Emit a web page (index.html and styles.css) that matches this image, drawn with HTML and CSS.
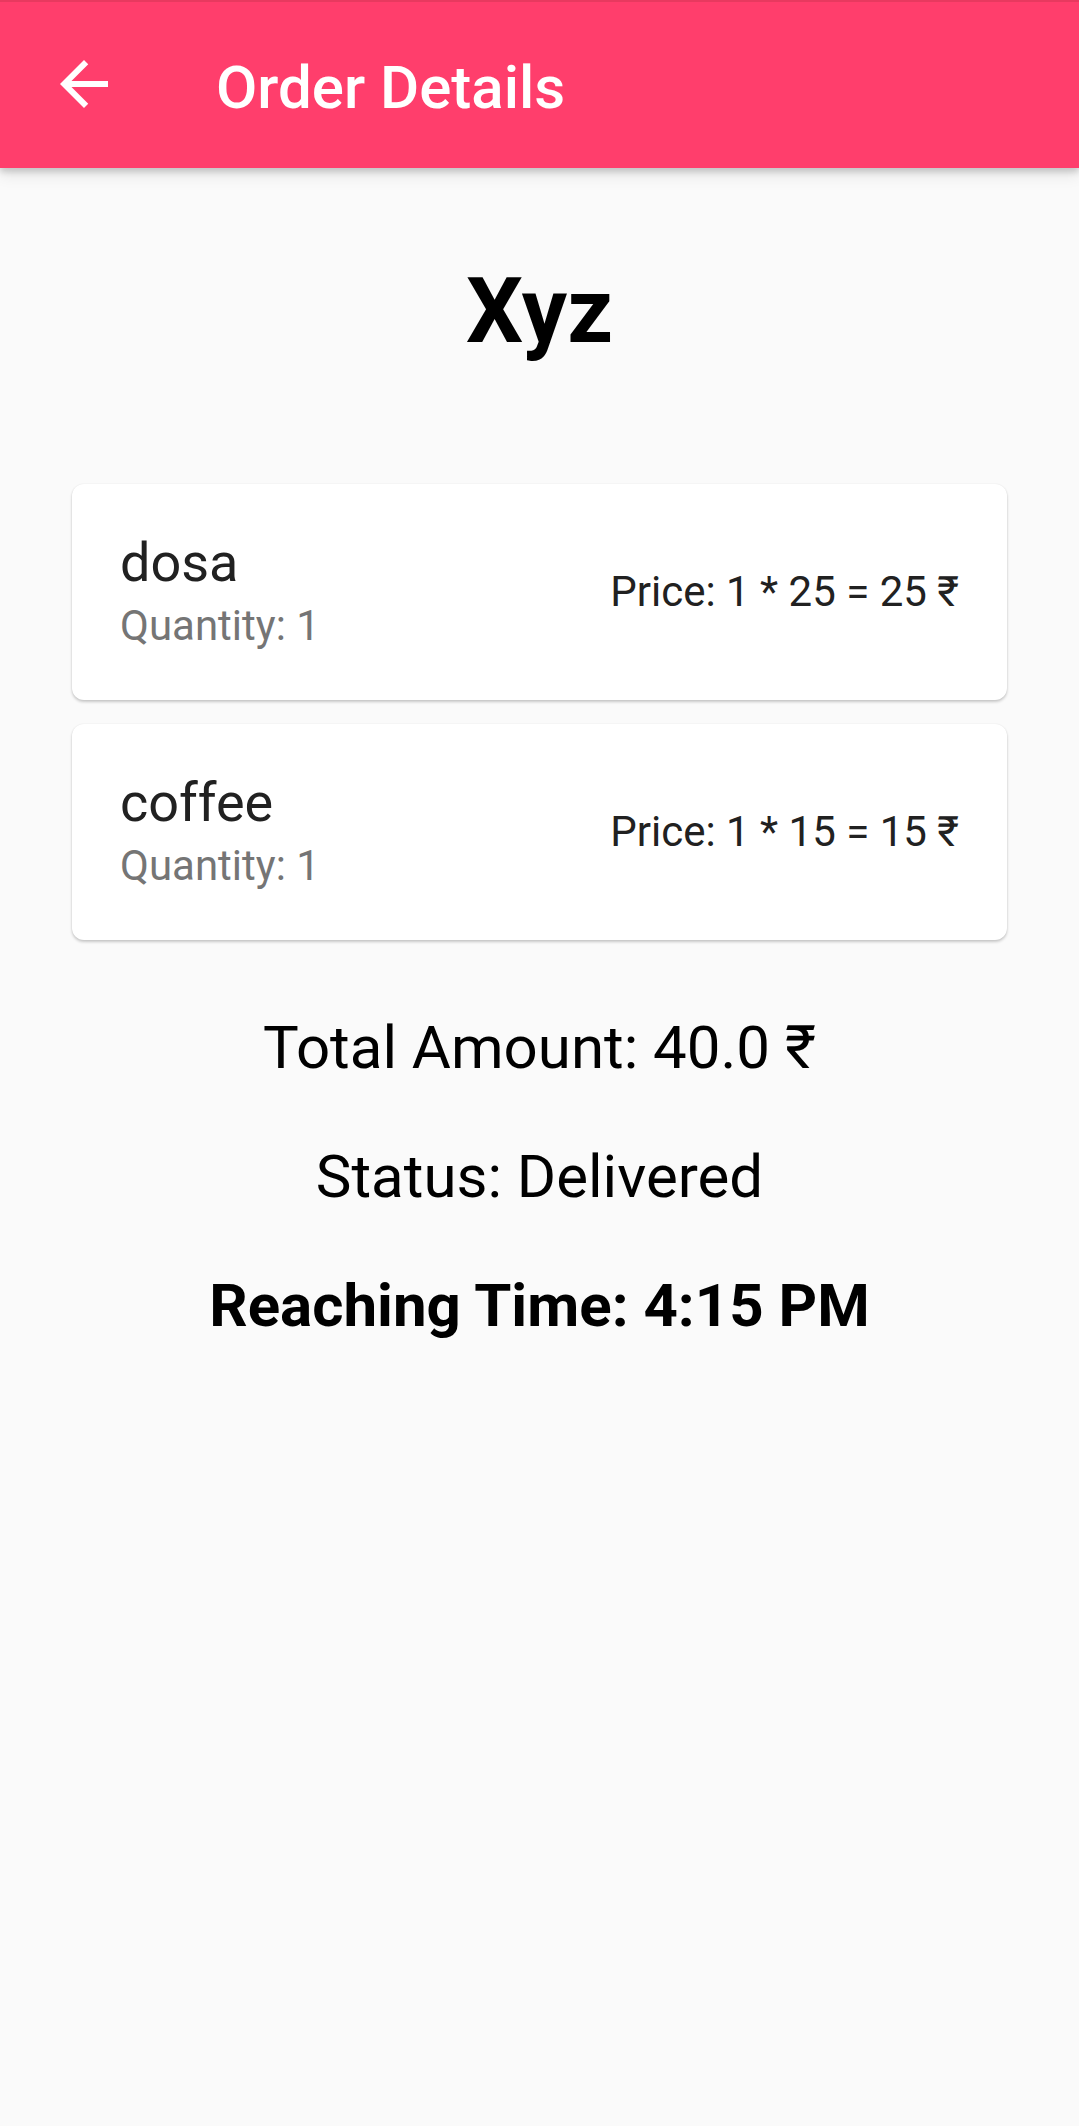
FILE: index.html
```html
<!DOCTYPE html>
<html lang="en">
<head>
<meta charset="utf-8">
<title>Order Details</title>
<link rel="stylesheet" href="styles.css">
</head>
<body>
<header class="app-bar">
  <button class="back-btn" aria-label="Back">
    <svg class="back-icon" viewBox="0 0 24 24" width="72" height="72" aria-hidden="true">
      <path d="M20 11H7.83l5.59-5.59L12 4l-8 8 8 8 1.41-1.41L7.83 13H20v-2z" fill="#ffffff"/>
    </svg>
  </button>
  <h1 class="app-title">Order Details</h1>
</header>
<main class="content">
  <h2 class="customer">Xyz</h2>
  <section class="items">
    <div class="card">
      <div class="item-info">
        <div class="item-name">dosa</div>
        <div class="item-qty">Quantity: 1</div>
      </div>
      <div class="item-price">Price: 1 * 25 = 25 ₹</div>
    </div>
    <div class="card">
      <div class="item-info">
        <div class="item-name">coffee</div>
        <div class="item-qty">Quantity: 1</div>
      </div>
      <div class="item-price">Price: 1 * 15 = 15 ₹</div>
    </div>
  </section>
  <section class="summary">
    <p class="summary-line">Total Amount: 40.0 ₹</p>
    <p class="summary-line">Status: Delivered</p>
    <p class="summary-line summary-bold">Reaching Time: 4:15 PM</p>
  </section>
</main>
</body>
</html>
```

FILE: styles.css
```css
* {
  box-sizing: border-box;
}

html, body {
  margin: 0;
  padding: 0;
}

body {
  background: #fafafa;
  font-family: Roboto, "Liberation Sans", "DejaVu Sans", sans-serif;
  color: #000;
  min-height: 2126px;
}

.app-bar {
  height: 168px;
  background: #ff3e6c;
  border-top: 2px solid #e8395f;
  display: flex;
  align-items: center;
  padding-left: 48px;
  box-shadow: 0 4px 6px rgba(0, 0, 0, 0.16), 0 8px 14px rgba(0, 0, 0, 0.08);
  position: relative;
  z-index: 2;
}

.back-btn {
  width: 72px;
  height: 72px;
  padding: 0;
  margin: -2px 0 0;
  border: 0;
  background: transparent;
  display: flex;
}

.back-icon {
  display: block;
}

.app-title {
  margin: 0 0 0 96px;
  padding-top: 5px;
  font-size: 60px;
  line-height: 70px;
  font-weight: 500;
  color: #ffffff;
}

.content {
  display: flex;
  flex-direction: column;
  align-items: stretch;
}

.customer {
  margin: 91px 0 0;
  text-align: center;
  font-size: 90px;
  line-height: 106px;
  font-weight: 700;
  color: #000;
}

.items {
  margin-top: 119px;
  padding: 0 72px;
  display: flex;
  flex-direction: column;
  gap: 24px;
}

.card {
  height: 216px;
  background: #ffffff;
  border-radius: 12px;
  box-shadow: 0 2px 3px rgba(0, 0, 0, 0.2), 0 0 2px rgba(0, 0, 0, 0.07);
  display: flex;
  align-items: center;
  justify-content: space-between;
  padding: 0 48px;
}

.item-info {
  display: flex;
  flex-direction: column;
}

.item-name {
  font-size: 54px;
  line-height: 67px;
  color: #212121;
}

.item-qty {
  font-size: 42px;
  line-height: 59px;
  color: #757575;
}

.item-price {
  font-size: 42px;
  line-height: 50px;
  color: #212121;
}

.summary {
  margin-top: 73px;
  display: flex;
  flex-direction: column;
  gap: 59px;
}

.summary-line {
  margin: 0;
  text-align: center;
  font-size: 60px;
  line-height: 70px;
  color: #000;
}

.summary-bold {
  font-weight: 700;
}
```
